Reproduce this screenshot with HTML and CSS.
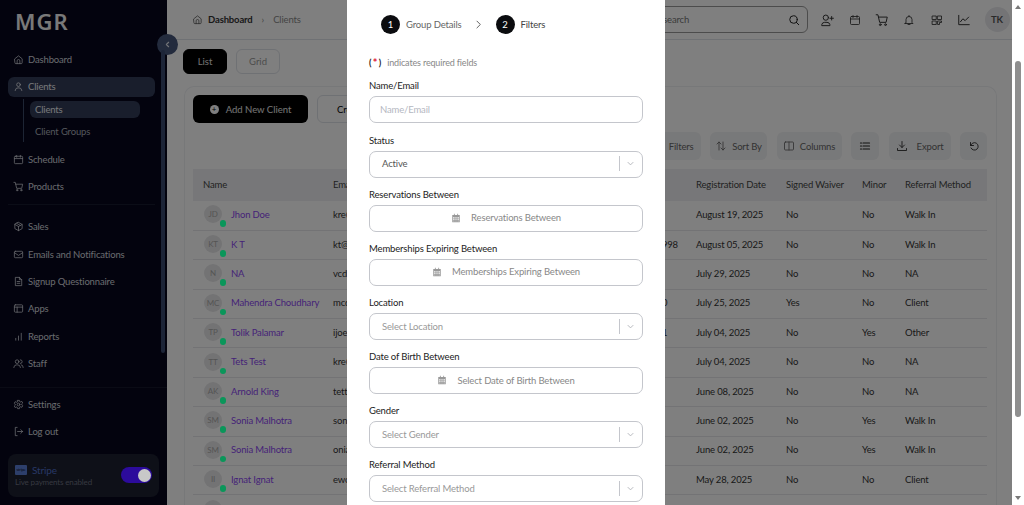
FILE: index.html
```html
<!DOCTYPE html>
<html lang="en">
<head>
<meta charset="utf-8">
<title>Clients</title>
<link rel="stylesheet" href="styles.css">
</head>
<body>
<svg class="defs" width="0" height="0" aria-hidden="true">
  <symbol id="i-home" viewBox="0 0 24 24"><path d="M4 10.500 12 4l8 6.500V19a2 2 0 0 1-2 2H6a2 2 0 0 1-2-2z"/><path d="M9 21v-6a3 3 0 0 1 6 0v6"/></symbol>
  <symbol id="i-user" viewBox="0 0 24 24"><circle cx="12" cy="8" r="4"/><path d="M5 21v-1a6 6 0 0 1 6-5h2a6 6 0 0 1 6 5v1"/></symbol>
  <symbol id="i-cal" viewBox="0 0 24 24"><rect x="3" y="5" width="18" height="16" rx="2"/><path d="M3 10h18M8 3v4M16 3v4"/></symbol>
  <symbol id="i-cart" viewBox="0 0 24 24"><path d="M2 3h3l3 13h11l2-9H6"/><circle cx="9" cy="20" r="1.500"/><circle cx="18" cy="20" r="1.500"/></symbol>
  <symbol id="i-box" viewBox="0 0 24 24"><path d="M12 3 20 7.500v9L12 21l-8-4.500v-9z"/><path d="M4 7.500l8 4.500 8-4.500M12 12v9M8 5.200l8 4.500"/></symbol>
  <symbol id="i-mail" viewBox="0 0 24 24"><rect x="3" y="5" width="18" height="14" rx="2"/><path d="m3 8 9 6 9-6"/></symbol>
  <symbol id="i-file" viewBox="0 0 24 24"><path d="M6 3h8l5 5v13H6z"/><path d="M14 3v5h5M9 12h6M9 16h6"/></symbol>
  <symbol id="i-apps" viewBox="0 0 24 24"><rect x="3" y="4" width="18" height="16" rx="2"/><path d="M3 9h18M9 9v11"/></symbol>
  <symbol id="i-bars" viewBox="0 0 24 24"><path d="M6 20v-4M12 20v-9M18 20V5"/></symbol>
  <symbol id="i-team" viewBox="0 0 24 24"><circle cx="9" cy="8" r="4"/><path d="M2 21v-1a6 6 0 0 1 6-5h2a6 6 0 0 1 6 5v1M16 4a4 4 0 0 1 0 8M18 15a5 5 0 0 1 4 5v1"/></symbol>
  <symbol id="i-gear" viewBox="0 0 24 24"><circle cx="12" cy="12" r="3"/><path d="M10 3h4l.6 2.600 2.300 1 2.300-1.400 2 3.400-2 1.800v2.600l2 1.800-2 3.400-2.300-1.400-2.300 1L14 21h-4l-.6-2.600-2.300-1-2.300 1.400-2-3.400 2-1.800v-2.600l-2-1.800 2-3.400 2.300 1.400 2.300-1z"/></symbol>
  <symbol id="i-out" viewBox="0 0 24 24"><path d="M9 3H5v18h4M10 12h11M17 8l4 4-4 4"/></symbol>
  <symbol id="i-search" viewBox="0 0 24 24"><circle cx="11" cy="11" r="7.500"/><path d="m16.500 16.500 5 5"/></symbol>
  <symbol id="i-adduser" viewBox="0 0 24 24"><circle cx="10" cy="8" r="4.500"/><path d="M3 21v-1a5 5 0 0 1 5-4h4a5 5 0 0 1 5 4v1zM20 6v6M17 9h6"/></symbol>
  <symbol id="i-bell" viewBox="0 0 24 24"><path d="M6 17V11a6 6 0 0 1 12 0v6l2 2H4zM12 3v2M10 21h4"/></symbol>
  <symbol id="i-qr" viewBox="0 0 24 24"><rect x="3" y="4" width="7.500" height="7"/><rect x="13.500" y="4" width="7.500" height="7"/><rect x="3" y="14" width="7.500" height="7"/><path d="M14 14h7v3h-4v4h-3z"/></symbol>
  <symbol id="i-chart" viewBox="0 0 24 24"><path d="M3 4v16h18M6 15l4-5 4 3 6-6"/></symbol>
  <symbol id="i-sort" viewBox="0 0 24 24"><path d="M8 20V4M4 8l4-4 4 4M16 4v16M12 16l4 4 4-4"/></symbol>
  <symbol id="i-cols" viewBox="0 0 24 24"><rect x="3" y="4" width="18" height="16" rx="2"/><path d="M12 4v16"/></symbol>
  <symbol id="i-list" viewBox="0 0 24 24"><path d="M3 6h2M8 6h13M3 12h2M8 12h13M3 18h2M8 18h13"/></symbol>
  <symbol id="i-down" viewBox="0 0 24 24"><path d="M12 3v12M7 10l5 5 5-5M3 17v4h18v-4"/></symbol>
  <symbol id="i-reset" viewBox="0 0 24 24"><path d="M5 5v6h6"/><path d="M5.500 11A7.500 7.500 0 1 1 6 16"/></symbol>
  <symbol id="i-calfill" viewBox="0 0 24 24"><path d="M3 5h4V2h2v3h6V2h2v3h4v17H3zM5 10v3h3.500v-3zm5.500 0v3h3v-3zm5 0v3H19v-3zM5 15v2.500h3.500V15zm5.500 0v2.500h3V15zm5 0v2.500H19V15zM5 19v1h3.500v-1zm5.500 0v1h3v-1zm5 0v1H19v-1z"/></symbol>
  <symbol id="i-chev" viewBox="0 0 24 24"><path d="m6 9 6 6 6-6"/></symbol>
  <symbol id="i-chevl" viewBox="0 0 24 24"><path d="m15 6-6 6 6 6"/></symbol>
</svg>

<div class="app">
  <aside class="sidebar">
    <div class="logo">MGR</div>
    <button class="collapse" type="button" aria-label="Collapse sidebar"><svg class="ico tiny"><use href="#i-chevl"/></svg></button>
    <div class="side-scroll"></div>
    <nav class="nav nav-main">
      <a class="nav-item"><svg class="ico"><use href="#i-home"/></svg>Dashboard</a>
      <a class="nav-item active"><svg class="ico"><use href="#i-user"/></svg>Clients</a>
      <div class="subnav">
        <a class="sub-item active">Clients</a>
        <a class="sub-item">Client Groups</a>
      </div>
      <a class="nav-item"><svg class="ico"><use href="#i-cal"/></svg>Schedule</a>
      <a class="nav-item"><svg class="ico"><use href="#i-cart"/></svg>Products</a>
      <hr class="nav-rule">
      <a class="nav-item"><svg class="ico"><use href="#i-box"/></svg>Sales</a>
      <a class="nav-item"><svg class="ico"><use href="#i-mail"/></svg>Emails and Notifications</a>
      <a class="nav-item"><svg class="ico"><use href="#i-file"/></svg>Signup Questionnaire</a>
      <a class="nav-item"><svg class="ico"><use href="#i-apps"/></svg>Apps</a>
      <a class="nav-item"><svg class="ico"><use href="#i-bars"/></svg>Reports</a>
      <a class="nav-item"><svg class="ico"><use href="#i-team"/></svg>Staff</a>
    </nav>
    <nav class="nav nav-foot">
      <a class="nav-item"><svg class="ico"><use href="#i-gear"/></svg>Settings</a>
      <a class="nav-item"><svg class="ico"><use href="#i-out"/></svg>Log out</a>
    </nav>
    <div class="stripe">
      <div class="stripe-text">
        <div class="stripe-name"><span class="stripe-logo">stripe</span>Stripe</div>
        <div class="stripe-sub">Live payments enabled</div>
      </div>
      <span class="toggle"><span class="knob"></span></span>
    </div>
  </aside>

  <main class="main">
    <header class="topbar">
      <div class="crumbs">
        <svg class="ico"><use href="#i-home"/></svg>
        <b>Dashboard</b><span class="sep">›</span><span class="crumb-now">Clients</span>
      </div>
      <div class="tools">
        <div class="search"><span>Global search</span><svg class="ico glass"><use href="#i-search"/></svg></div>
        <svg class="ico big"><use href="#i-adduser"/></svg>
        <svg class="ico mid"><use href="#i-cal"/></svg>
        <svg class="ico big"><use href="#i-cart"/></svg>
        <svg class="ico mid"><use href="#i-bell"/></svg>
        <svg class="ico mid"><use href="#i-qr"/></svg>
        <svg class="ico big"><use href="#i-chart"/></svg>
        <span class="me">TK</span>
      </div>
    </header>

    <div class="tabs">
      <button class="tab on" type="button">List</button>
      <button class="tab" type="button">Grid</button>
    </div>

    <section class="card">
      <div class="card-head">
        <button class="add" type="button"><span class="plus">+</span>Add New Client</button>
        <button class="create" type="button">Create</button>
      </div>
      <div class="actions">
        <span class="act a-filters">Filters</span>
        <span class="act a-sort"><svg class="ico small"><use href="#i-sort"/></svg>Sort By</span>
        <span class="act a-cols"><svg class="ico small"><use href="#i-cols"/></svg>Columns</span>
        <span class="act a-list"><svg class="ico small"><use href="#i-list"/></svg></span>
        <span class="act a-export"><svg class="ico small"><use href="#i-down"/></svg>Export</span>
        <span class="act a-reset"><svg class="ico small"><use href="#i-reset"/></svg></span>
      </div>
      <table class="clients">
        <colgroup>
          <col class="c-name"><col class="c-email"><col class="c-phone"><col class="c-reg"><col class="c-wv"><col class="c-minor"><col class="c-ref">
        </colgroup>
        <thead>
          <tr><th>Name</th><th>Email</th><th>Phone</th><th>Registration Date</th><th>Signed Waiver</th><th>Minor</th><th>Referral Method</th></tr>
        </thead>
        <tbody>
          <tr><td><span class="who"><span class="av">JD<i></i></span><a>Jhon Doe</a></span></td><td>kre@mail.com</td><td></td><td>August 19, 2025</td><td>No</td><td>No</td><td>Walk In</td></tr>
          <tr><td><span class="who"><span class="av">KT<i></i></span><a>K T</a></span></td><td>kt@mail.com</td><td>+91 98765 4321998</td><td>August 05, 2025</td><td>No</td><td>No</td><td>Walk In</td></tr>
          <tr><td><span class="who"><span class="av">N<i></i></span><a>NA</a></span></td><td>vcd@mail.com</td><td></td><td>July 29, 2025</td><td>No</td><td>No</td><td>NA</td></tr>
          <tr><td><span class="who"><span class="av">MC<i></i></span><a>Mahendra Choudhary</a></span></td><td>mcd@mail.com</td><td>+91 98765 43210</td><td>July 25, 2025</td><td>Yes</td><td>No</td><td>Client</td></tr>
          <tr><td><span class="who"><span class="av">TP<i></i></span><a>Tolik Palamar</a></span></td><td>ijoe@mail.com</td><td>+91 98765 43211</td><td>July 04, 2025</td><td>No</td><td>Yes</td><td>Other</td></tr>
          <tr><td><span class="who"><span class="av">TT<i></i></span><a>Tets Test</a></span></td><td>kre@mail.com</td><td></td><td>July 04, 2025</td><td>No</td><td>No</td><td>NA</td></tr>
          <tr><td><span class="who"><span class="av">AK<i></i></span><a>Arnold King</a></span></td><td>tett@mail.com</td><td></td><td>June 08, 2025</td><td>No</td><td>No</td><td>NA</td></tr>
          <tr><td><span class="who"><span class="av">SM<i></i></span><a>Sonia Malhotra</a></span></td><td>son@mail.com</td><td></td><td>June 02, 2025</td><td>No</td><td>Yes</td><td>Walk In</td></tr>
          <tr><td><span class="who"><span class="av">SM<i></i></span><a>Sonia Malhotra</a></span></td><td>onia@mail.com</td><td></td><td>June 02, 2025</td><td>No</td><td>Yes</td><td>Walk In</td></tr>
          <tr><td><span class="who"><span class="av">II<i></i></span><a>Ignat Ignat</a></span></td><td>ewo@mail.com</td><td></td><td>May 28, 2025</td><td>No</td><td>No</td><td>Client</td></tr>
          <tr><td><span class="who"><span class="av"></span></span></td><td></td><td></td><td></td><td></td><td></td><td></td></tr>
        </tbody>
      </table>
    </section>
  </main>

  <div class="scrim"></div>

  <div class="modal" role="dialog" aria-label="Filters">
    <div class="steps">
      <span class="num">1</span><span class="step-label">Group Details</span>
      <svg class="step-arrow" viewBox="0 0 24 24"><path d="m8 4 8 8-8 8"/></svg>
      <span class="num">2</span><span class="step-label now">Filters</span>
    </div>
    <p class="required"><span class="paren">(<em>*</em>)</span>indicates required fields</p>
    <div class="field">
      <label>Name/Email</label>
      <div class="control text"><span class="ph-text">Name/Email</span></div>
    </div>
    <div class="field">
      <label>Status</label>
      <div class="control select"><span class="val">Active</span><span class="divider"></span><svg class="chev"><use href="#i-chev"/></svg></div>
    </div>
    <div class="field">
      <label>Reservations Between</label>
      <div class="control date"><svg class="cal"><use href="#i-calfill"/></svg><span>Reservations Between</span></div>
    </div>
    <div class="field">
      <label>Memberships Expiring Between</label>
      <div class="control date"><svg class="cal"><use href="#i-calfill"/></svg><span>Memberships Expiring Between</span></div>
    </div>
    <div class="field">
      <label>Location</label>
      <div class="control select"><span class="ph-sel">Select Location</span><span class="divider"></span><svg class="chev"><use href="#i-chev"/></svg></div>
    </div>
    <div class="field">
      <label>Date of Birth Between</label>
      <div class="control date"><svg class="cal"><use href="#i-calfill"/></svg><span>Select Date of Birth Between</span></div>
    </div>
    <div class="field">
      <label>Gender</label>
      <div class="control select"><span class="ph-sel">Select Gender</span><span class="divider"></span><svg class="chev"><use href="#i-chev"/></svg></div>
    </div>
    <div class="field">
      <label>Referral Method</label>
      <div class="control select"><span class="ph-sel">Select Referral Method</span><span class="divider"></span><svg class="chev"><use href="#i-chev"/></svg></div>
    </div>
  </div>

  <div class="pagebar">
    <span class="arrow up"></span>
    <span class="thumb"></span>
    <span class="arrow down"></span>
  </div>
</div>
</body>
</html>
```

FILE: styles.css
```css
* { box-sizing: border-box; }
html, body { margin: 0; height: 100%; overflow: hidden; }
body { font-family: "Lato", "Noto Sans", sans-serif; font-size: 9.500px; letter-spacing: -.15px; color: #444; background: #fff; }
.defs { position: absolute; }
.app { position: relative; display: flex; width: 1024px; height: 505px; overflow: hidden; }

.ico { width: 11px; height: 11px; fill: none; stroke: currentColor; stroke-width: 1.7; stroke-linecap: round; stroke-linejoin: round; flex: none; }
.ico.big { width: 14px; height: 14px; }
.ico.mid { width: 12px; height: 12px; margin: 0 1px; }
.ico.small { width: 12px; height: 12px; }
.ico.tiny { width: 9px; height: 9px; stroke-width: 3; }
.ico.glass { width: 12px; height: 12px; stroke-width: 2; color: #222; }

/* Sidebar */
.sidebar { position: relative; flex: none; width: 167px; height: 505px; background: #06061c; color: #d3d6de; display: flex; flex-direction: column; }
.logo { flex: none; font-family: "Noto Sans", sans-serif; font-size: 22px; line-height: 30px; font-weight: 600; letter-spacing: 1px; color: #f2f2f2; padding: 6px 0 0 15px; height: 49.500px; }
.collapse { position: absolute; right: -10.500px; top: 34px; width: 21px; height: 21px; padding: 0; border: 0; border-radius: 50%; background: #46567a; color: #e5e8ef; display: flex; align-items: center; justify-content: center; }
.side-scroll { position: absolute; right: 2px; top: 50px; width: 4px; height: 303px; border-radius: 2px; background: #3a4a70; }
.nav { display: flex; flex-direction: column; padding: 0 12px 0 8px; }
.nav-item { display: flex; align-items: center; gap: 4px; height: 20px; padding-left: 5px; margin-bottom: 7.300px; border-radius: 6px; white-space: nowrap; flex: none; }
.nav-item.active { background: #323c58; color: #eef0f5; }
.subnav { flex: none; margin: -5.300px 0 7.500px 15px; padding: 2px 0 0 6px; border-left: 1px solid #3a4a68; display: flex; flex-direction: column; gap: 5px; height: 43px; }
.sub-item { flex: none; display: flex; align-items: center; height: 17px; padding-left: 5px; width: 110px; border-radius: 6px; }
.sub-item.active { background: #323c58; color: #eef0f5; }
.sub-item:not(.active) { color: #a8adb8; }
.nav-rule { width: 100%; border: 0; border-top: 1px solid #171a2e; margin: 0 0 12px; }
.nav-foot { border-top: 1px solid #14162a; margin-top: 6px; padding-top: 6.700px; }
.stripe { flex: none; margin: 5px 8px 0; height: 43px; border-radius: 8px; background: #1c2030; display: flex; align-items: center; justify-content: space-between; padding: 0 7px; }
.stripe-name { display: flex; align-items: center; gap: 5px; color: #4f6fc9; font-size: 10px; }
.stripe-logo { width: 12px; height: 10px; border-radius: 1px; background: #5b7fd6; color: #0a0a20; font-size: 4px; display: flex; align-items: center; justify-content: center; }
.stripe-sub { color: #6c7180; font-size: 8px; margin-top: 1px; }
.toggle { position: relative; z-index: 1; width: 31px; height: 16px; border-radius: 8px; background: #2c0b9c; }
.knob { position: absolute; right: 1.500px; top: 1.500px; width: 13px; height: 13px; border-radius: 50%; background: #c8c8c8; }

/* Main */
.main { flex: 1; min-width: 0; height: 505px; background: #fff; display: flex; flex-direction: column; margin-right: 12px; }
.topbar { flex: none; height: 40px; border-bottom: 1px solid #dfe2e8; display: flex; align-items: center; justify-content: space-between; padding: 0 2.500px 0 25px; }
.crumbs { display: flex; align-items: center; gap: 5px; color: #555; }
.crumbs b { font-weight: 700; color: #333; }
.sep { color: #888; margin: 0 4px; }
.crumb-now { color: #888; }
.tools { display: flex; align-items: center; gap: 13.400px; color: #333; }
.search { flex: none; width: 208px; height: 27px; border: 1px solid #999; border-radius: 6px; display: flex; align-items: center; justify-content: flex-end; gap: 99px; padding: 0 7px; color: #777; margin-right: -1.400px; }
.me { width: 25px; height: 25px; border-radius: 50%; background: #e8e9ec; color: #555; display: flex; align-items: center; justify-content: center; font-weight: 700; }

.tabs { flex: none; display: flex; gap: 9px; padding: 9px 0 0 16px; }
.tab { width: 44px; height: 25px; padding: 0; border-radius: 6px; border: 1px solid #dfe2e8; background: #fff; color: #999; font: inherit; }
.tab.on { background: #000; color: #e5e5e5; border-color: #000; }

.card { margin: 12px 15px 0 17px; padding: 8px 9px 0 8px; border: 1px solid #eef0f3; border-bottom: 0; border-radius: 10px 10px 0 0; flex: 1; min-height: 0; }
.card-head { display: flex; gap: 9px; }
.add { width: 115px; height: 28px; border: 0; border-radius: 6px; background: #000; color: #e8e8e8; font: inherit; display: flex; align-items: center; justify-content: center; gap: 7px; }
.plus { width: 9px; height: 9px; border-radius: 50%; background: #fff; color: #000; font-size: 8px; line-height: 9px; }
.create { width: 120px; height: 28px; border: 1px solid #dfe2e8; border-radius: 6px; background: #fff; font: inherit; text-align: left; padding-left: 19px; }
.actions { display: flex; justify-content: flex-end; gap: 9.500px; margin-top: 9px; height: 28px; }
.act { flex: none; display: flex; align-items: center; justify-content: center; gap: 5px; border-radius: 6px; background: #f1f2f4; color: #666; }
.a-filters { width: 60px; justify-content: flex-end; padding-right: 7px; }
.a-sort { width: 57px; }
.a-cols { width: 65px; }
.a-list { width: 28px; color: #222; }
.a-export { width: 62px; gap: 9px; }
.a-export .ico { color: #222; }
.a-reset { width: 27px; color: #222; }
.a-list .ico { stroke-width: 2.400px; }

.clients { border-collapse: collapse; table-layout: fixed; width: 794px; margin-top: 9px; }
.c-name { width: 130px; } .c-email { width: 260px; } .c-phone { width: 103px; } .c-reg { width: 90px; } .c-wv { width: 76px; } .c-minor { width: 43px; } .c-ref { width: 92px; }
.clients th { height: 32px; background: #eeeff2; text-align: left; font-weight: 400; color: #444; padding: 0 0 1px 10px; white-space: nowrap; }
.clients td { height: 29.400px; border-bottom: 1px solid #e6e7ea; padding: 0 0 2px 10px; color: #333; white-space: nowrap; }
.who { display: flex; align-items: center; gap: 9px; margin-left: 1px; }
.who a { color: #8b46f0; }
.av { position: relative; flex: none; width: 18px; height: 18px; border-radius: 50%; background: #e7e7e9; color: #aaa; font-size: 8px; display: flex; align-items: center; justify-content: center; }
.av i { position: absolute; z-index: 1; right: -4px; bottom: -3.500px; width: 6.500px; height: 6.500px; border-radius: 50%; background: #0a965a; }

/* Overlay + modal */
.scrim { position: absolute; left: 0; top: 0; right: 12px; bottom: 0; background: rgba(0,0,0,.5); }
.modal { position: absolute; z-index: 2; left: 347px; top: 0; width: 318px; height: 505px; background: #fff; padding: 0 22px; overflow: hidden; color: #333; }
.steps { display: flex; align-items: center; height: 48px; padding-left: 12px; }
.num { width: 19px; height: 19px; border-radius: 50%; background: #0b0c0f; color: #fff; display: flex; align-items: center; justify-content: center; margin-right: 6px; }
.step-label { color: #666; }
.step-label.now { color: #444; }
.step-arrow { width: 11px; height: 11px; margin: 0 12px 0 11px; fill: none; stroke: #555; stroke-width: 2; }
.required { margin: 7px 0 0; height: 14.300px; display: flex; align-items: center; color: #888; font-size: 9px; }
.paren { display: flex; align-items: center; gap: 1.500px; color: #222; font-weight: 700; margin-right: 6px; }
.paren em { color: #e0173a; font-style: normal; font-size: 11px; font-weight: 700; }
.field { margin-top: 8.150px; }
.field label { display: block; height: 19px; line-height: 18px; color: #222; }
.control { height: 27px; border: 1px solid #c4c6cc; border-radius: 7px; display: flex; align-items: center; background: #fff; padding-bottom: 1px; }
.text { padding-left: 10px; }
.ph-text { color: #b4b7bf; }
.select { padding-left: 12px; }
.val { color: #555; }
.ph-sel { color: #999; }
.divider { width: 1px; height: 15px; background: #c4c6cc; margin-left: auto; }
.chev { width: 11px; height: 11px; margin: 0 6px 0 5px; fill: none; stroke: #b0b2b8; stroke-width: 2; }
.date { justify-content: center; gap: 10px; color: #888; }
.cal { width: 10px; height: 10px; fill: #999; }

/* Page scrollbar */
.pagebar { position: absolute; right: 0; top: 0; width: 12px; height: 505px; background: #fff; display: flex; flex-direction: column; align-items: center; }
.thumb { width: 6px; height: 356px; border-radius: 3px; background: #8f8f8f; margin: 47px 0 auto; }
.arrow { flex: none; width: 0; height: 0; border-left: 3px solid transparent; border-right: 3px solid transparent; margin: 5px 0; }
.arrow.up { border-bottom: 4px solid #7a7a7a; }
.arrow.down { border-top: 4px solid #7a7a7a; }
```
